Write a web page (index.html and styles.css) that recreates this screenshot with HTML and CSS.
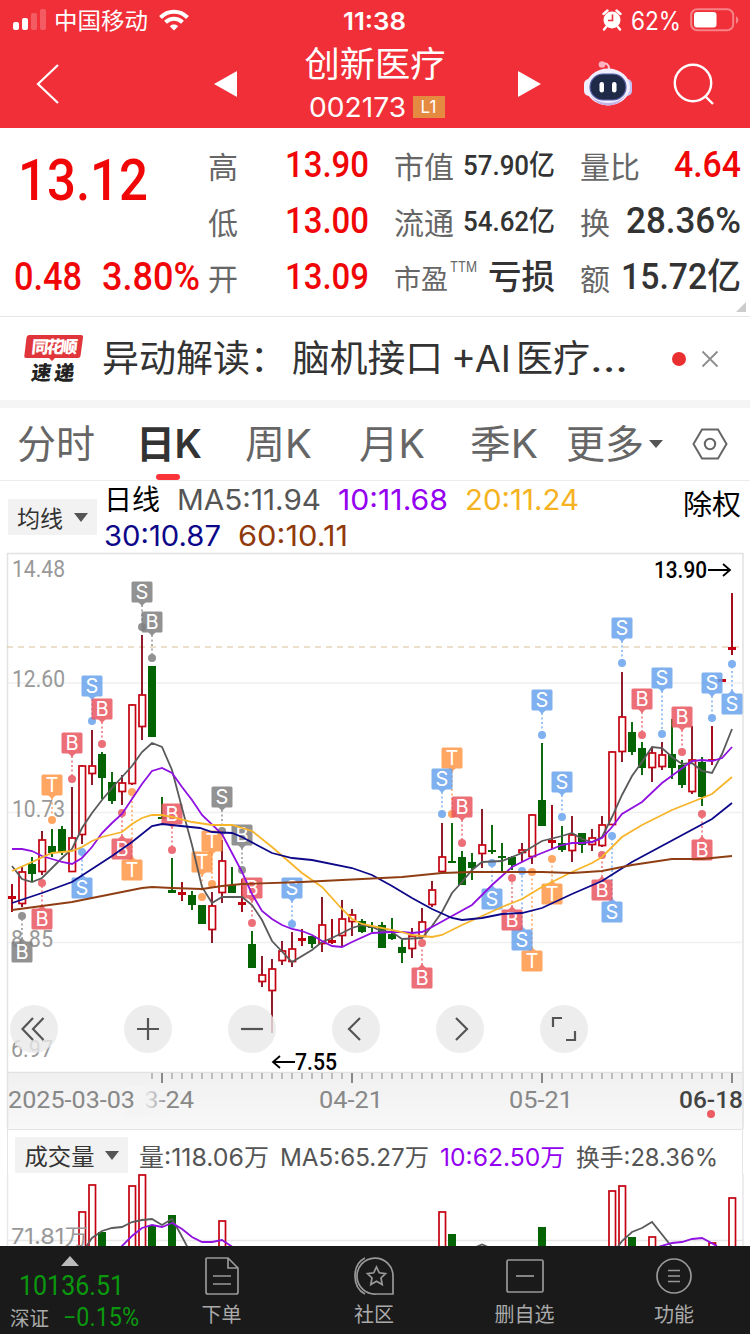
FILE: index.html
```
<!DOCTYPE html>
<html lang="zh-CN">
<head>
  <meta charset="UTF-8">
  <meta name="viewport" content="width=device-width, initial-scale=1.0">
  <title>创新医疗 002173</title>
  <link rel="stylesheet" href="styles.css">
</head>
<body>
  <header class="header">
    <div class="status">
      <svg class="signal" width="34" height="24" viewBox="0 0 34 24" fill="#fff">
        <rect x="0" y="13" width="6" height="8" rx="2"/>
        <rect x="9" y="9" width="6" height="12" rx="2"/>
        <rect x="18" y="4" width="6" height="17" rx="2" opacity=".22"/>
        <rect x="27" y="0" width="6" height="21" rx="2" opacity=".22"/>
      </svg>
      <span class="carrier" data-w="94">中国移动</span>
      <svg class="wifi" width="30" height="22" viewBox="0 0 30 22" fill="none" stroke="#fff" stroke-width="4">
        <path d="M1.500 8.500C9 .700 21 .700 28.500 8.500"/>
        <path d="M6.500 13.300C11.500 8.500 18.500 8.500 23.500 13.300"/>
        <path d="M15 21.500L10.800 17.300C13 14.800 17 14.800 19.200 17.300Z" fill="#fff" stroke="none"/>
      </svg>
      <span class="time" data-w="63">11:38</span>
      <svg class="alarm" width="20" height="22" viewBox="0 0 20 22">
        <circle cx="10" cy="11" r="8.500" fill="#fff"/>
        <path d="M1.500 5L5.500 1.500M18.500 5L14.500 1.500M4 18L2 20.500M16 18L18 20.500" stroke="#fff" stroke-width="2.400" stroke-linecap="round"/>
        <path d="M10.500 5.500V11.500H6" stroke="#f12f38" stroke-width="1.600" fill="none"/>
      </svg>
      <span class="percent" data-w="50">62%</span>
      <svg class="battery" width="50" height="24" viewBox="0 0 50 24">
        <rect x="1.200" y="1.200" width="42" height="21" rx="6" fill="none" stroke="#fff" stroke-width="2" opacity=".4"/>
        <rect x="4" y="4" width="22.500" height="15.500" rx="3" fill="#fff"/>
        <path d="M46 8V16Q48.500 14 48.500 12T46 8Z" fill="#fff" opacity=".4"/>
      </svg>
    </div>
    <nav class="titlebar">
      <svg width="24" height="42" viewBox="0 0 24 42" fill="none" stroke="#fff" stroke-width="2.200"><path d="M22 2L2 21L22 40"/></svg>
      <span></span>
      <svg width="24" height="26" viewBox="0 0 24 26"><path d="M0 13L23 0V26Z" fill="#fff"/></svg>
      <div class="stock">
        <h1><span data-w="141">创新医疗</span></h1>
        <p><span data-w="97">002173</span><em>L1</em></p>
      </div>
      <svg width="24" height="26" viewBox="0 0 24 26"><path d="M24 13L1 0V26Z" fill="#fff"/></svg>
      <svg class="robot" width="50" height="46" viewBox="0 0 50 46">
        <path d="M19 3Q26 1 26 8" fill="none" stroke="#ffc9d2" stroke-width="2"/>
        <circle cx="19" cy="3.500" r="3.300" fill="#ffb1bd"/>
        <rect x="1" y="18" width="10" height="17" rx="5" fill="#eeeeff"/>
        <rect x="39" y="18" width="10" height="17" rx="5" fill="#c4bff4"/>
        <ellipse cx="25" cy="26" rx="22" ry="18.500" fill="#f1efff"/>
        <path d="M7 34Q14 44.500 25 44.500T44 33Q36 42 25 42T7 34Z" fill="#c3b0e6"/>
        <rect x="7" y="13" width="36" height="26" rx="13" fill="#1f2a48" stroke="#5b62a8" stroke-width="1.200"/>
        <rect x="16.500" y="21" width="4.500" height="10.500" rx="2.200" fill="#fff"/>
        <rect x="29" y="21" width="4.500" height="10.500" rx="2.200" fill="#fff"/>
      </svg>
      <svg width="42" height="42" viewBox="0 0 42 42" fill="none" stroke="#fff" stroke-width="2.400"><circle cx="20" cy="20" r="18.200"/><path d="M32 33L40 41"/></svg>
    </nav>
  </header>

  <section class="quote">
    <div class="price">
      <strong data-w="130">13.12</strong>
      <p><b data-w="68">0.48</b><b data-w="98">3.80%</b></p>
    </div>
    <div class="col first">
      <div class="row"><label>高</label><b class="up" data-w="84">13.90</b></div>
      <div class="row"><label>低</label><b class="up" data-w="84">13.00</b></div>
      <div class="row"><label>开</label><b class="up" data-w="84">13.09</b></div>
    </div>
    <div class="col">
      <div class="row"><label>市值</label><b class="small" data-w="92">57.90亿</b></div>
      <div class="row"><label>流通</label><b class="small" data-w="92">54.62亿</b></div>
      <div class="row"><label class="pe">市盈<sup data-w="27">TTM</sup></label><b class="cn" data-w="67">亏损</b></div>
    </div>
    <div class="col">
      <div class="row"><label>量比</label><b class="up" data-w="67">4.64</b></div>
      <div class="row"><label>换</label><b data-w="115">28.36%</b></div>
      <div class="row"><label>额</label><b data-w="120">15.72亿</b></div>
    </div>
    <i class="corner"></i>
  </section>

  <section class="news">
    <svg width="60" height="50" viewBox="0 0 60 50">
      <path d="M5 1H57Q59.500 1 59 3.500L56.500 22Q56 24 54 24H31L28 27L25 24H2Q0 24 .3 22L2.500 3.500Q3 1 5 1Z" fill="#e0363b"/>
      <text class="logo" x="7" y="19" textLength="46" fill="#fff" transform="skewX(-6) translate(2 0)">同花顺</text>
      <text class="logo big" x="8" y="46" textLength="43" fill="#222" transform="skewX(-8) translate(5 0)">速递</text>
    </svg>
    <p>
      <span class="tag" data-w="185">异动解读：</span>
      <span class="topic" data-w="151">脑机接口</span>
      <span class="ai" data-w="60">+AI</span>
      <span class="med" data-w="74">医疗</span>
      <span class="dots" data-w="38">...</span>
    </p>
    <i class="unread"></i>
    <svg width="18" height="18" viewBox="0 0 18 18" stroke="#8d8d8d" stroke-width="1.800"><path d="M1.500 1.500L16.500 16.500M16.500 1.500L1.500 16.500"/></svg>
  </section>

  <nav class="tabs">
    <span data-w="78">分时</span>
    <span class="active">日K</span>
    <span data-w="67">周K</span>
    <span data-w="66">月K</span>
    <span data-w="68">季K</span>
    <span data-w="78">更多</span>
    <i class="more"></i>
    <svg width="36" height="32" viewBox="0 0 36 32" fill="none" stroke="#666" stroke-width="2"><path d="M10 1.500H26L34.500 16L26 30.500H10L1.500 16Z"/><circle cx="18" cy="16" r="5.200"/></svg>
  </nav>

  <section class="ma">
    <button class="picker"><span data-w="46">均线</span><i></i></button>
    <div class="values">
      <p><span class="day" data-w="56">日线</span><span class="ma5" data-w="144">MA5:11.94</span><span class="ma10" data-w="110">10:11.68</span><span class="ma20" data-w="114">20:11.24</span></p>
      <p><span class="ma30" data-w="117">30:10.87</span><span class="ma60" data-w="110">60:10.11</span></p>
    </div>
    <span class="adjust" data-w="58">除权</span>
  </section>

  <svg id="kline" width="750" height="577" viewBox="0 552 750 577"></svg>

  <section class="volume">
    <div class="volume-head">
      <button class="picker"><span data-w="70">成交量</span><i></i></button>
      <span class="v1" data-w="130">量:118.06万</span>
      <span class="v2" data-w="149">MA5:65.27万</span>
      <span class="v3" data-w="125">10:62.50万</span>
      <span class="v4" data-w="142">换手:28.36%</span>
    </div>
    <svg id="vol" width="750" height="72" viewBox="0 1174 750 72"></svg>
  </section>

  <footer class="bottom">
    <div class="index">
      <i></i>
      <strong data-w="105">10136.51</strong>
      <p><span data-w="39">深证</span><b data-w="76">−0.15%</b></p>
    </div>
    <div class="item">
      <svg width="36" height="40" viewBox="0 0 36 40"><path d="M3 2H24L34 12V36Q34 38 32 38H4Q2 38 2 36V3Q2 2 3 2ZM24 2V12H34M9 20H27M9 28H27"/></svg>
      <span>下单</span>
    </div>
    <div class="item">
      <svg width="42" height="40" viewBox="0 0 42 40"><path d="M12 2Q2 7 2 20T12 38M40 38H23A18 18 0 1 1 40 20Z"/><path d="M23.500 11L26.300 16.800L32.500 17.600L28 22L29.200 28.500L23.500 25.300L17.800 28.500L19 22L14.500 17.600L20.700 16.800Z"/></svg>
      <span>社区</span>
    </div>
    <div class="item">
      <svg width="40" height="40" viewBox="0 0 40 40"><rect x="2" y="4" width="36" height="32" rx="1.500"/><path d="M11 20H29"/></svg>
      <span>删自选</span>
    </div>
    <div class="item">
      <svg width="40" height="40" viewBox="0 0 40 40"><circle cx="20" cy="20" r="17"/><path d="M14 14.500H26M14 20H26M14 25.500H26"/></svg>
      <span>功能</span>
    </div>
  </footer>

  <script src="chart.js"></script>
</body>
</html>
```
FILE: styles.css
```
* {
  box-sizing: border-box;
}
body {
  margin: 0;
  width: 750px;
  height: 1334px;
  overflow: hidden;
  background: #fff;
  color: #333;
  font-family: Inter, "Noto Sans CJK SC", sans-serif;
}
h1, p {
  margin: 0;
  font-weight: normal;
}
svg {
  display: block;
  flex: none;
}
[data-w] {
  display: inline-block;
  white-space: nowrap;
  transform-origin: left center;
  flex: none;
}

/* header */
.header {
  height: 128px;
  background: #f12f38;
  color: #fff;
}
.status {
  display: flex;
  align-items: center;
  height: 40px;
  padding-left: 13px;
}
.signal {
  margin-top: 2px;
}
.carrier {
  margin: -2px 11px 0 7px;
  font-size: 23px;
}
.wifi {
  margin-right: 1px;
}
.time {
  margin: 2px 0 0 153px;
  font-size: 24px;
  font-weight: 600;
}
.alarm {
  margin: 0 9px 0 196px;
}
.percent {
  margin-top: 2px;
  font-size: 25px;
}
.battery {
  margin-left: 9px;
}
.titlebar {
  display: grid;
  grid-template-columns: 95px 105px 51px 246px 63px 96px 76px;
  height: 86px;
  justify-items: center;
  align-items: center;
}
.stock {
  padding-top: 4px;
  text-align: center;
}
.stock h1 {
  height: 42px;
  font-size: 35px;
  line-height: 40px;
}
.stock p {
  display: flex;
  justify-content: center;
  align-items: center;
  height: 42px;
  padding-left: 3px;
  font-size: 27px;
}
.stock em {
  width: 32px;
  height: 22px;
  margin-left: 9px;
  background: #e58a41;
  font-size: 17px;
  font-style: normal;
  line-height: 22px;
}

/* quote */
.quote {
  position: relative;
  display: flex;
  height: 189px;
  padding-top: 9px;
  border-bottom: 1px solid #e6e6e6;
}
.price {
  width: 209px;
  color: #f00606;
  font-family: Roboto, sans-serif;
}
.price strong {
  display: block;
  height: 112px;
  margin-left: 18px;
  font-size: 58px;
  font-weight: 500;
  line-height: 86px;
}
.price p {
  display: flex;
  gap: 20px;
  padding-left: 14px;
  font-size: 38px;
  line-height: 57px;
}
.price b, .row b {
  font-weight: 500;
}
.col {
  width: 160px;
  margin-right: 26px;
}
.col:last-of-type {
  margin-right: 0;
}
.row {
  display: flex;
  justify-content: space-between;
  height: 56px;
  line-height: 56px;
}
.row label {
  margin-left: -1px;
  color: #666;
  font-size: 30px;
  line-height: 61px;
}
.row b {
  font-family: Roboto, "Noto Sans CJK SC", sans-serif;
  font-size: 36.5px;
}
.row b.small {
  font-size: 28.5px;
  line-height: 58px;
}
.row b.cn {
  font-size: 34px;
}
.row .up {
  color: #f00606;
}
.row .pe {
  font-size: 27px;
}
.pe sup {
  margin-left: 2px;
  font-size: 15px;
  line-height: 10px;
  vertical-align: 17px;
}
.corner {
  position: absolute;
  right: 4px;
  bottom: 4px;
  border-left: 10px solid transparent;
  border-bottom: 10px solid #ccc;
}

/* news */
.news {
  display: flex;
  align-items: center;
  height: 91px;
  padding-left: 24px;
  border-bottom: 8px solid #f5f5f5;
  font-size: 37px;
}
.news p {
  display: flex;
  width: 588px;
  padding-left: 18px;
  line-height: 60px;
}
.logo {
  font-size: 17px;
  font-weight: 900;
}
.logo.big {
  font-size: 20px;
}
.topic {
  margin-left: 5px;
}
.ai {
  margin: 0 5px 0 8px;
}
.unread {
  width: 14px;
  height: 14px;
  margin-right: 15px;
  border-radius: 50%;
  background: #ea2f31;
}

/* tabs */
.tabs {
  display: flex;
  align-items: center;
  height: 73px;
  padding-left: 17px;
  border-bottom: 1px solid #ececec;
  color: #666;
  font-size: 39px;
  line-height: 72px;
}
.tabs span {
  margin-right: 45px;
}
.tabs span:first-child {
  margin-right: 41px;
}
.tabs span:nth-child(3) {
  margin-right: 47px;
}
.tabs span:nth-child(5) {
  margin-right: 28px;
}
.tabs span:nth-child(6) {
  margin-right: 5px;
}
.tabs .active {
  position: relative;
  width: 66px;
  color: #333;
  font-weight: 600;
  letter-spacing: -.5px;
  margin-right: 43px;
}
.active::after {
  content: "";
  position: absolute;
  left: 20px;
  bottom: 0;
  width: 24px;
  height: 6px;
  border-radius: 3px;
  background: #fb3439;
}
.more {
  margin-right: 29px;
  border: 7px solid transparent;
  border-top: 8px solid #555;
  border-bottom: 0;
}

/* moving averages */
.ma {
  display: flex;
  height: 71px;
  padding-left: 8px;
  color: #000;
}
.picker {
  display: flex;
  align-items: center;
  gap: 11px;
  width: 89px;
  height: 36px;
  padding: 0 9px;
  border: 0;
  background: #f2f2f2;
  color: #333;
  font-family: "Noto Sans CJK SC", sans-serif;
  font-size: 23px;
}
.picker i {
  border: 7px solid transparent;
  border-top: 9px solid #555;
  border-bottom: 0;
}
.ma .picker {
  margin-top: 18px;
}
.values {
  width: 587px;
  padding: 1px 0 0 7px;
  font-size: 28.5px;
  line-height: 36px;
}
.values p {
  display: flex;
  gap: 17px;
}
.ma5 { color: #555; }
.ma10 { color: #9400f0; }
.ma20 { color: #f5b222; }
.ma30 { color: #0c0789; }
.ma60 { color: #90390b; }
.adjust {
  margin-left: -1px;
  font-size: 28px;
  line-height: 48px;
}

/* svg charts */
.din {
  font-family: Roboto, sans-serif;
  font-size: 24.5px;
}
.flag {
  font-family: Inter, sans-serif;
  font-size: 20px;
  text-anchor: middle;
}
.volume {
  height: 117px;
}
.volume-head {
  display: flex;
  align-items: center;
  height: 45px;
  margin-left: 7px;
  width: 736px;
  padding: 6px 0 0 7px;
  border: solid #e4e4e4;
  border-width: 1px 1px 0;
  color: #555;
  font-size: 24px;
}
.volume-head .picker {
  width: 113px;
  margin-right: 11px;
}
.volume-head > span {
  margin-right: 11px;
}
.volume-head .v3 {
  color: #9400f0;
}

/* bottom bar */
.bottom {
  display: grid;
  grid-template-columns: 146px 151px 154px 147px 152px;
  height: 88px;
  background: #1a1a1a;
  color: #aaa;
  font-size: 20px;
}
.index {
  display: flex;
  flex-direction: column;
  color: #0b980f;
  font-family: Roboto, sans-serif;
}
.index i {
  width: 18px;
  margin: 10px 0 0 61px;
  border: 9px solid transparent;
  border-bottom: 10px solid #bbb;
  border-top: 0;
}
.index strong {
  margin-left: 19px;
  font-size: 28.5px;
  font-weight: 400;
  line-height: 39px;
}
.index p {
  display: flex;
  gap: 14px;
  padding-left: 10px;
  font-size: 25px;
  line-height: 25px;
}
.index p span {
  color: #aaa;
  font-family: "Noto Sans CJK SC", sans-serif;
  font-size: 20px;
}
.index b {
  font-weight: 400;
}
.item {
  display: flex;
  flex-direction: column;
  align-items: center;
  padding-top: 10px;
  line-height: 38px;
}
.item svg {
  fill: none;
  stroke: #999;
  stroke-width: 1.7;
}
```
FILE: chart.js
```
// squeeze texts to their column width
document.querySelectorAll('[data-w]').forEach(function (el) {
  const w = Number(el.dataset.w);
  const range = document.createRange();
  range.selectNodeContents(el);
  const natural = range.getBoundingClientRect().width;
  el.style.width = w + 'px';
  el.style.transform = 'scaleX(' + (w / natural) + ')';
});

const RED = '#c40010';
const GREEN = '#046404';
const WICK = { r: '#8a1020', d: '#a00010', g: '#046404' };
const X = i => 12 + i * 10;

// high, body top, body bottom, low, kind
const candles = [
  [884, 896, 899, 912, 'd'], [867, 871, 904, 907, 'r'], [857, 864, 874, 881, 'g'], [831, 839, 872, 875, 'r'],
  [829, 846, 853, 857, 'g'], [826, 829, 852, 855, 'g'], [787, 837, 872, 872, 'r'], [765, 765, 835, 844, 'r'],
  [730, 765, 774, 785, 'r'], [752, 754, 778, 799, 'g'], [772, 782, 801, 804, 'g'], [775, 782, 792, 805, 'r'],
  [704, 704, 784, 785, 'r'], [635, 694, 727, 740, 'r'], [666, 666, 737, 737, 'g'], [797, 817, 819, 819, 'g'],
  [858, 890, 893, 893, 'g'], [882, 892, 895, 901, 'd'], [891, 895, 905, 910, 'g'], [905, 905, 924, 924, 'g'],
  [892, 905, 930, 943, 'r'], [840, 860, 893, 903, 'r'], [867, 885, 893, 893, 'g'], [879, 902, 905, 912, 'd'],
  [931, 944, 968, 968, 'g'], [956, 974, 982, 987, 'r'], [959, 968, 991, 1033, 'r'], [941, 950, 961, 965, 'r'],
  [932, 948, 962, 967, 'r'], [929, 938, 941, 946, 'd'], [936, 936, 944, 948, 'g'], [897, 924, 944, 952, 'r'],
  [919, 940, 943, 944, 'd'], [900, 918, 936, 947, 'r'], [909, 914, 922, 936, 'r'], [919, 921, 932, 933, 'g'],
  [922, 926, 928, 932, 'g'], [922, 925, 948, 948, 'g'], [918, 934, 939, 940, 'g'], [940, 947, 953, 963, 'g'],
  [928, 935, 949, 958, 'r'], [908, 921, 937, 937, 'r'], [881, 889, 905, 907, 'r'], [823, 856, 872, 872, 'r'],
  [823, 861, 863, 863, 'g'], [851, 857, 885, 885, 'g'], [853, 862, 868, 880, 'g'], [809, 844, 854, 868, 'r'],
  [825, 850, 852, 854, 'g'], [843, 856, 858, 871, 'g'], [856, 857, 865, 870, 'g'], [843, 849, 853, 862, 'r'],
  [814, 814, 857, 864, 'r'], [743, 800, 826, 826, 'g'], [805, 840, 843, 849, 'd'], [826, 843, 850, 852, 'g'],
  [816, 834, 851, 862, 'r'], [833, 833, 845, 853, 'g'], [829, 837, 845, 851, 'r'], [816, 824, 846, 847, 'r'],
  [751, 751, 825, 825, 'r'], [672, 716, 752, 762, 'r'], [722, 732, 752, 755, 'g'], [742, 748, 768, 775, 'g'],
  [747, 752, 768, 782, 'r'], [742, 754, 767, 770, 'r'], [719, 754, 768, 779, 'g'], [760, 765, 785, 788, 'g'],
  [726, 759, 792, 794, 'r'], [757, 762, 797, 806, 'g'], [726, 759, 761, 765, 'd'], [679, 679, 682, 679, 'd'],
  [593, 647, 650, 655, 'd']
];

// x, flag y, dot y, letter, colour
const GRAY = '#808080', BLUE = '#69a4ee', PINK = '#e95661', ORANGE = '#ff9747';
const flags = [
  [142, 592, 627, 'S', GRAY], [152, 622, 658, 'B', GRAY], [22, 952, 916, 'B', GRAY], [222, 797, 831, 'S', GRAY], [242, 835, 870, 'B', GRAY],
  [52, 785, 820, 'T', ORANGE], [132, 870, 792, 'T', ORANGE], [202, 862, 897, 'T', ORANGE], [212, 841, 884, 'T', ORANGE],
  [452, 758, 814, 'T', ORANGE], [532, 961, 872, 'T', ORANGE], [552, 894, 859, 'T', ORANGE],
  [92, 686, 721, 'S', BLUE], [82, 888, 852, 'S', BLUE], [292, 888, 924, 'S', BLUE], [442, 779, 814, 'S', BLUE],
  [492, 899, 863, 'S', BLUE], [522, 940, 871, 'S', BLUE], [542, 700, 735, 'S', BLUE], [562, 782, 817, 'S', BLUE],
  [612, 912, 836, 'S', BLUE], [622, 628, 663, 'S', BLUE], [662, 678, 734, 'S', BLUE], [712, 683, 718, 'S', BLUE], [732, 704, 664, 'S', BLUE],
  [42, 919, 883, 'B', PINK], [72, 743, 779, 'B', PINK], [102, 709, 744, 'B', PINK], [122, 849, 813, 'B', PINK],
  [172, 814, 850, 'B', PINK], [252, 888, 923, 'B', PINK], [422, 978, 943, 'B', PINK], [462, 807, 843, 'B', PINK],
  [512, 920, 878, 'B', PINK], [602, 890, 855, 'B', PINK], [642, 699, 735, 'B', PINK], [682, 717, 752, 'B', PINK], [702, 850, 814, 'B', PINK]
];

const lines = [
  ['#5a5a5a', '12,866 22,879 32,882 42,878 52,868 62,858 72,849 82,828 92,813 102,800 112,788 122,777 132,766 142,752 152,743 162,747 172,770 182,808 192,845 202,887 212,903 222,897 242,897 252,905 262,920 272,941 292,962 312,950 322,942 332,938 352,928 362,925 372,927 382,931 392,932 402,939 422,938 432,926 442,912 452,893 462,882 472,870 482,862 502,861 522,853 542,841 562,836 572,833 582,839 592,842 602,837 612,817 622,795 632,776 642,762 652,747 662,748 672,757 682,764 692,763 702,771 712,773 722,754 732,729'],
  ['#8f10e0', '12,849 22,849 32,851 42,856 52,859 62,862 72,864 82,858 92,847 102,833 112,823 122,814 132,799 142,784 152,771 162,768 172,773 182,787 192,800 202,815 222,834 232,853 242,872 252,894 262,911 272,919 282,925 292,929 302,931 312,935 322,941 332,946 342,947 352,942 372,933 392,932 402,932 412,933 422,932 432,927 452,916 472,905 492,885 512,867 532,857 552,849 562,845 572,843 582,843 592,842 602,838 612,827 622,814 642,802 662,783 692,761 702,760 712,761 722,758 732,747'],
  ['#f7b52c', '12,871 32,862 52,853 72,851 82,847 92,841 102,837 122,832 132,824 142,818 152,815 162,815 172,817 192,822 212,825 232,825 252,831 272,847 302,873 322,887 342,909 352,919 362,924 382,928 402,932 412,935 432,937 442,935 462,925 502,907 522,899 542,887 572,872 592,863 602,857 622,837 642,825 672,810 712,794 732,777'],
  ['#0d0889', '12,903 42,893 72,882 92,869 112,856 132,842 152,826 162,824 200,828 212,832 232,833 242,837 272,853 292,858 312,860 352,868 372,875 392,886 412,898 432,909 452,918 462,920 482,918 502,914 522,913 542,908 572,894 602,881 632,862 712,819 732,803'],
  ['#8f3d12', '12,910 42,906 72,902 112,894 142,888 152,887 172,888 202,889 222,886 242,884 302,882 402,877 442,873 472,872 542,872 572,873 602,871 632,865 672,859 702,859 732,856']
];

function bar(x, top, bottom, kind) {
  if (kind === 'r') {
    return `<rect x="${x - 3}" y="${top + 1}" width="6.500" height="${bottom - top - 1.5}" fill="#fff" stroke="${RED}" stroke-width="1.700"/>`;
  }
  return `<rect x="${x - 4}" y="${top}" width="8" height="${bottom - top}" fill="${kind === 'g' ? GREEN : RED}"/>`;
}

function text(x, y, w, str, color, weight) {
  return `<text class="din" x="${x}" y="${y}" textLength="${w}" lengthAdjust="spacingAndGlyphs" fill="${color}" font-weight="${weight || 400}">${str}</text>`;
}

function polyline(color, points) {
  return `<polyline points="${points}" fill="none" stroke="${color}" stroke-width="1.800"/>`;
}

let out = `<defs>
  <linearGradient id="fade"><stop offset="0" stop-color="#f4f4f4"/><stop offset=".4" stop-color="#f4f4f4"/><stop offset="1" stop-color="#f4f4f4" stop-opacity="0"/></linearGradient>
  <linearGradient id="axis" x2="0" y2="1"><stop offset="0" stop-color="#f0f0f0"/><stop offset="1" stop-color="#f8f8f8"/></linearGradient>
</defs>
<rect x="7" y="1073" width="737" height="56" fill="url(#axis)"/>
<path d="M7.500 1129V553.500H743V1129M7 1072.500H743" fill="none" stroke="#e2e2e2" stroke-width="1.500"/>
<path d="M8 683H742M8 812.500H742M8 942.500H742" stroke="#f0f0f0" stroke-width="1.500"/>
<path d="M7 647H743" stroke="#d9c09a" stroke-width="1.200" stroke-dasharray="6 5"/>`;

out += text(12, 577, 53, '14.48', '#999') + text(12, 687, 53, '12.60', '#999') + text(12, 817, 53, '10.73', '#999')
  + text(11, 947, 42, '8.85', '#999') + text(11, 1057, 42, '6.97', '#999');

candles.forEach(function (c, i) {
  if (c[0] < c[3]) out += `<path d="M${X(i)} ${c[0]}V${c[3]}" stroke="${WICK[c[4]]}" stroke-width="1.900"/>`;
  out += bar(X(i), c[1], c[2], c[4]);
});

flags.forEach(function (f) {
  const [x, y, dot, letter, color] = f;
  const dir = dot > y ? 1 : -1;
  const tip = y + dir * 13;
  out += `<g opacity=".85"><path d="M${x} ${tip}V${dot}" stroke="${color}" stroke-width="1.500" stroke-dasharray="2 2.500"/>
    <circle cx="${x}" cy="${dot}" r="4" fill="${color}"/>
    <rect x="${x - 10.5}" y="${y - 10.5}" width="21" height="21" rx="1.500" fill="${color}"/>
    <path d="M${x - 4} ${y + dir * 10}H${x + 4}L${x} ${tip + dir}Z" fill="${color}"/></g>
    <text class="flag" x="${x}" y="${y + 7}" fill="#fff">${letter}</text>`;
});

lines.forEach(l => out += polyline(l[0], l[1]));

// control buttons
const controls = [
  [34, 'M-1 -11L-11.500 0L-1 11M9.500 -11L-1 0L9.500 11'],
  [148, 'M-11 0H11M0 -11V11'],
  [252, 'M-11 0H11'],
  [356, 'M4 -11L-7 0L4 11'],
  [460, 'M-4 -11L7 0L-4 11'],
  [564, 'M-11 -2V-11H-2M11 2V11H2']
];
controls.forEach(function (c) {
  out += `<g transform="translate(${c[0]} 1029)"><circle r="24" fill="#e9e9e9" opacity=".8"/><path d="${c[1]}" fill="none" stroke="#555" stroke-width="2.200"/></g>`;
});

out += text(654, 578, 53, '13.90', '#000', 500) + text(295, 1070, 42, '7.55', '#000', 500);
out += '<path d="M708 570H730M723 564L730 570L723 576M295 1062H273M280 1056L273 1062L280 1068" fill="none" stroke="#000" stroke-width="1.800"/>';

// date axis
for (let x = 152; x <= 732; x += 10) {
  const major = (x - 162) % 190 === 0;
  out += `<path d="M${x} 1073V${major ? 1083 : 1079}" stroke="#888" stroke-width="${major ? 2 : 1}"/>`;
}
out += text(130, 1108, 64, '03-24', '#888') + '<rect x="126" y="1086" width="42" height="30" fill="url(#fade)"/>'
  + text(8, 1108, 127, '2025-03-03', '#888') + text(319, 1108, 64, '04-21', '#888')
  + text(509, 1108, 64, '05-21', '#888') + text(679, 1108, 64, '06-18', '#444', 500)
  + '<circle cx="711" cy="1114" r="4" fill="#ec5a62"/>';
document.getElementById('kline').innerHTML = out;

// volume
const vols = [[82, 1211, 'r'], [92, 1184, 'r'], [102, 1232, 'g'], [132, 1185, 'r'], [142, 1174, 'r'], [152, 1226, 'g'], [172, 1215, 'g'], [222, 1220, 'r'],
  [442, 1211, 'r'], [452, 1234, 'g'], [542, 1227, 'g'], [612, 1190, 'r'], [622, 1185, 'r'], [632, 1237, 'g'], [652, 1236, 'r'], [712, 1242, 'r'], [732, 1197, 'r']];
let vol = '<path d="M7.500 1174V1246M743 1174V1246M8 1240.500H742" stroke="#e8e8e8" stroke-width="1.500"/>';
vols.forEach(v => vol += bar(v[0], v[1], 1250, v[2]));
vol += '<text x="11" y="1244" textLength="77" lengthAdjust="spacingAndGlyphs" fill="#999" font-size="22">71.81万</text>';
vol += polyline('#5a5a5a', '86,1247 92,1238 102,1231 112,1228 122,1227 132,1222 142,1220 152,1219 162,1225 172,1219 180,1233 188,1248');
vol += polyline('#5a5a5a', '476,1247 482,1244.500 488,1247') + polyline('#5a5a5a', '617,1248 622,1241 632,1232 642,1228 652,1222 672,1247');
vol += polyline('#8f10e0', '121,1247 132,1236 142,1228 152,1225 162,1227 172,1223 182,1229 192,1237 202,1242 212,1242 222,1240 234,1248');
vol += polyline('#8f10e0', '658,1247 672,1243 682,1242 692,1239 702,1238 717,1246');
document.getElementById('vol').innerHTML = vol;
```
